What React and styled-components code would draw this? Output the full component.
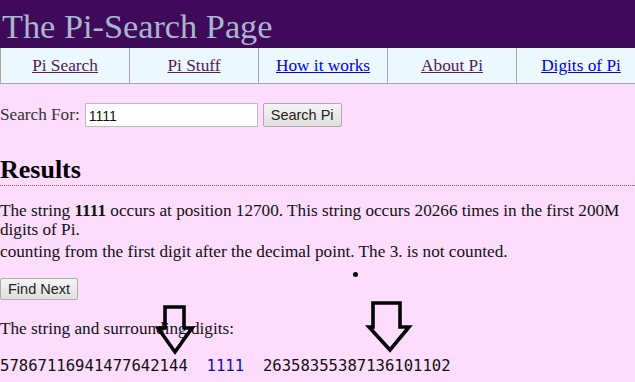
import styled, { createGlobalStyle } from "styled-components";

const GlobalStyle = createGlobalStyle`
  html, body {
    margin: 0;
    padding: 0;
    background: #fddcfd;
    overflow: hidden;
  }
  body {
    font-family: "Liberation Serif", "Times New Roman", serif;
    font-size: 17px;
    color: #111;
  }
`;

const Page = styled.div`
  position: relative;
  width: 635px;
  height: 382px;
  overflow: hidden;
  background: #fddcfd;
`;

const Header = styled.header`
  height: 48px;
  box-sizing: border-box;
  padding: 3px 0 0 2px;
  background: #400a5a;
  display: flex;
  align-items: center;
`;

const Title = styled.h1`
  margin: 0;
  font-family: "Liberation Serif", "Times New Roman", serif;
  font-weight: normal;
  font-size: 34.3px;
  line-height: 44px;
  color: #a9b6cf;
`;

const Nav = styled.nav`
  display: grid;
  grid-template-columns: repeat(5, 129px);
  width: 645px;
  height: 36px;
  background: #ebf8fd;
  border-bottom: 1px solid #a6a6a6;
  box-sizing: border-box;
`;

const NavCell = styled.div`
  display: flex;
  align-items: center;
  justify-content: center;
  border-left: 1px solid #a6a6a6;
  font-size: 17.3px;
`;

const NavLink = styled.a`
  color: ${(p) => (p.$visited ? "#551a5b" : "#0000ee")};
  text-decoration: underline;
`;

const Content = styled.main`
  padding-top: 19px;
`;

const SearchRow = styled.form`
  display: flex;
  align-items: center;
  height: 24px;
  gap: 5px;
`;

const Label = styled.span`
  color: #333;
  font-size: 17.2px;
`;

const TextInput = styled.input`
  width: 173px;
  height: 24px;
  box-sizing: border-box;
  border: 1px solid #bdbdbd;
  background: #fff;
  padding: 1px 3px 0;
  font-family: "Liberation Sans", Arial, sans-serif;
  font-size: 14px;
  color: #111;
  outline: none;
`;

const Button = styled.button`
  height: ${(p) => p.$h || 24}px;
  padding: 0 7px;
  box-sizing: border-box;
  border: 1px solid #acacac;
  border-radius: 2px;
  background: linear-gradient(#f4f4f4, #dfdfdf);
  font-family: "Liberation Sans", Arial, sans-serif;
  font-size: 14.5px;
  color: #222;
`;

const ResultsHeading = styled.h2`
  margin: 28px 0 0;
  font-size: 26px;
  line-height: 29px;
  font-weight: bold;
  color: #000;
  padding-bottom: 1px;
  border-bottom: 1px dotted #d8405a;
`;

const Paragraph = styled.p`
  margin: ${(p) => p.$mt || 0}px 0 0;
  font-size: 17.2px;
  line-height: 19px;
  color: #111;
  width: 630px;
`;

const ButtonRow = styled.div`
  margin-top: 17px;
`;

const Mono = styled.pre`
  margin: 19px 0 0;
  font-family: "DejaVu Sans Mono", "Liberation Mono", monospace;
  font-size: 15.6px;
  line-height: 18px;
  color: #111;
`;

const Match = styled.span`
  color: #1010a8;
`;

const Dot = styled.div`
  position: absolute;
  left: 353px;
  top: 272px;
  width: 5px;
  height: 5px;
  border-radius: 50%;
  background: #000;
`;

const ArrowSvg = styled.svg`
  position: absolute;
  overflow: visible;
`;

const Arrow = ({ left, top, points }) => (
  <ArrowSvg style={{ left, top }} width="46" height="52">
    <polygon points={points} fill="none" stroke="#000" strokeWidth="3.6" strokeLinejoin="miter" />
  </ArrowSvg>
);

const navItems = [
  { label: "Pi Search", visited: true },
  { label: "Pi Stuff", visited: true },
  { label: "How it works", visited: false },
  { label: "About Pi", visited: true },
  { label: "Digits of Pi", visited: false },
];

export default function App() {
  return (
    <Page>
      <GlobalStyle />
      <Header>
        <Title>The Pi-Search Page</Title>
      </Header>
      <Nav>
        {navItems.map((n) => (
          <NavCell key={n.label}>
            <NavLink href="#" $visited={n.visited}>{n.label}</NavLink>
          </NavCell>
        ))}
      </Nav>
      <Content>
        <SearchRow onSubmit={(e) => e.preventDefault()}>
          <Label>Search For:</Label>
          <TextInput defaultValue="1111" />
          <Button type="button">Search Pi</Button>
        </SearchRow>
        <ResultsHeading>Results</ResultsHeading>
        <Paragraph $mt={15}>
          The string <b>1111</b> occurs at position 12700. This string occurs 20266 times in the first 200M digits of Pi.
        </Paragraph>
        <Paragraph $mt={3}>
          counting from the first digit after the decimal point. The 3. is not counted.
        </Paragraph>
        <ButtonRow>
          <Button type="button" $h={22}>Find Next</Button>
        </ButtonRow>
        <Paragraph $mt={19}>The string and surrounding digits:</Paragraph>
        <Mono>
          57867116941477642144  <Match>1111</Match>  26358355387136101102
        </Mono>
      </Content>
      <Dot />
      <Arrow left={157} top={305} points="8,2 27,2 27,23 35,23 18,47 1,23 8,23" />
      <Arrow left={367} top={301} points="6,2 33,2 33,26 42,26 23,49 2,26 6,26" />
    </Page>
  );
}
